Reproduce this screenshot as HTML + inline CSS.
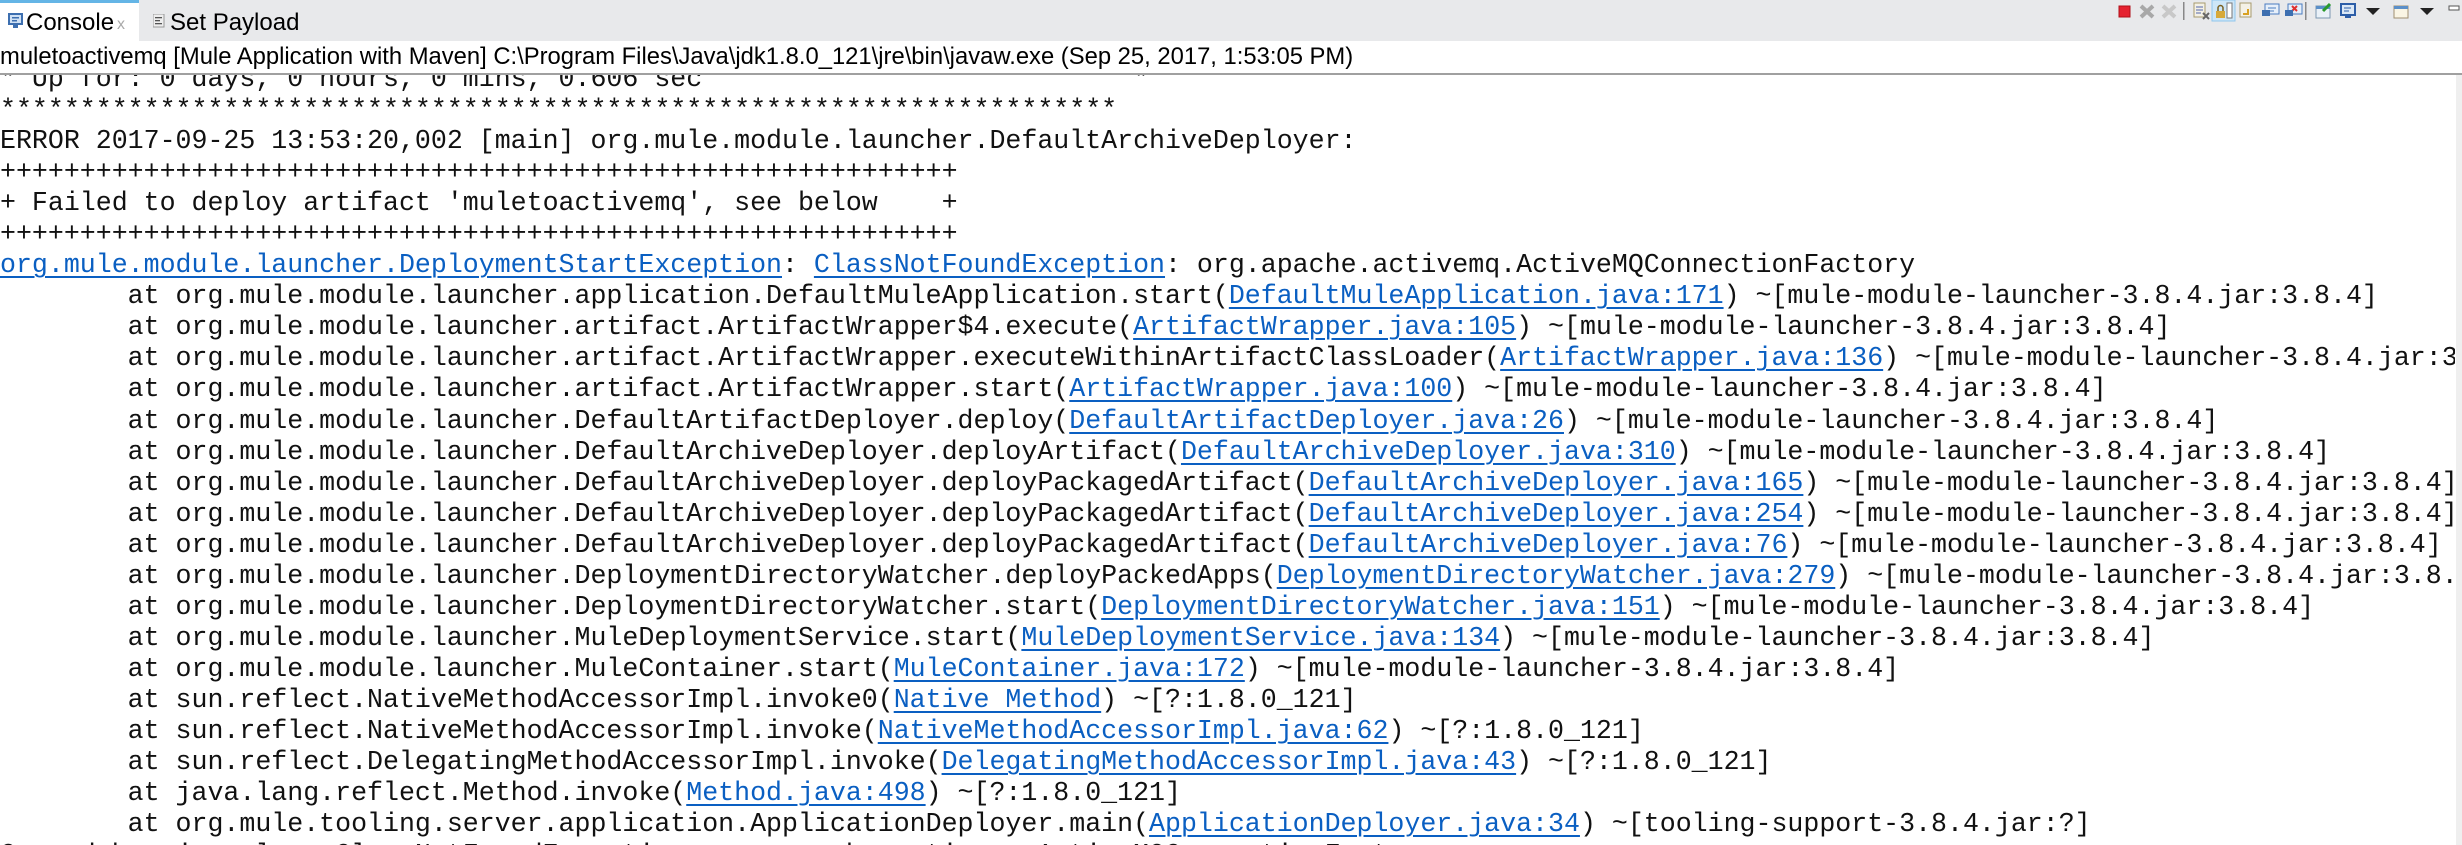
<!DOCTYPE html>
<html><head><meta charset="utf-8"><style>
html,body{margin:0;padding:0;width:2462px;height:845px;overflow:hidden;background:#fff;position:relative}
.tabbar{position:absolute;left:0;top:0;width:2462px;height:41px;background:#e8e9eb}
.tab{position:absolute;left:0;top:0;width:139px;height:41px;background:#fff;border-top:3px solid #64b5e6;box-sizing:border-box}
.t{position:absolute;font-family:"Liberation Sans",sans-serif;font-size:24px;color:#000;white-space:nowrap}
.title{position:absolute;left:0;top:41px;height:32px;width:2462px;overflow:hidden;font-family:"Liberation Sans",sans-serif;font-size:23.8px;line-height:32px;white-space:nowrap}
.sep{position:absolute;left:0;top:73px;width:2462px;height:2px;background:#a0a0a0}
.con{position:absolute;left:0;top:75px;width:2455px;height:770px;overflow:hidden}
pre{margin:-11px 0 0 0;font-family:"Liberation Mono","Courier New",monospace;font-size:26.6px;line-height:31.05px;tab-size:8;-moz-tab-size:8;color:#111}
a{color:#0a5fc2;text-decoration:underline;text-decoration-thickness:2px;text-underline-offset:4px}
.sb{position:absolute;left:2456px;top:75px;width:6px;height:770px;background:#efefef}
</style></head><body>
<div class="tabbar"></div>
<div class="tab"></div>
<svg style="position:absolute;left:8px;top:13px" width="15" height="16"><rect x="1" y="1" width="13" height="10" fill="#cfe1f5" stroke="#3d6fb0" stroke-width="2"/><rect x="4" y="4" width="7" height="1.5" fill="#3d6fb0"/><rect x="4" y="7" width="5" height="1.5" fill="#3d6fb0"/><rect x="5" y="12" width="5" height="3" fill="#3d6fb0"/></svg>
<div class="t" style="left:26px;top:9px">Console</div>
<div class="t" style="left:117px;top:16px;font-size:16px;color:#aaa">x</div>
<svg style="position:absolute;left:153px;top:14px" width="12" height="14"><rect x="0" y="0" width="11" height="13" fill="#eee" stroke="#999"/><rect x="2" y="3" width="7" height="1.3" fill="#555"/><rect x="2" y="6" width="5" height="1.3" fill="#555"/><rect x="2" y="9" width="7" height="1.3" fill="#555"/></svg>
<div class="t" style="left:170px;top:9px">Set Payload</div>

<svg style="position:absolute;left:2110px;top:0" width="352" height="24">
<rect x="9" y="6" width="11" height="11" fill="#e52230" stroke="#b01018"/>
<path d="M31 6l12 11M43 6L31 17" stroke="#a8a8a8" stroke-width="4"/>
<path d="M53 6l12 11M65 6L53 17" stroke="#c8c8c8" stroke-width="4"/>
<rect x="73" y="2" width="1.5" height="18" fill="#888"/>
<rect x="84" y="3" width="11" height="14" fill="#f4f1e6" stroke="#a79a6e"/><path d="M86 7h7M86 10h7M86 13h5" stroke="#5566aa"/><path d="M93 13l6 6M99 13l-6 6" stroke="#666" stroke-width="2"/>
<rect x="102" y="0" width="23" height="21" fill="#cde6f7" stroke="#90c6ec"/>
<rect x="106" y="11" width="9" height="7" fill="#d7a93a"/><path d="M108 11v-3a2.5 2.5 0 0 1 5 0v3" stroke="#7a6020" fill="none" stroke-width="1.5"/><rect x="117" y="3" width="5" height="15" fill="#fff" stroke="#777"/>
<rect x="130" y="3" width="11" height="14" fill="#f4f1e6" stroke="#a79a6e"/><path d="M138 9v5h-5" stroke="#d8a020" fill="none" stroke-width="2"/>
<rect x="155" y="4" width="14" height="10" fill="#e6effa" stroke="#4a7cc0"/><path d="M158 8h8M158 11h6" stroke="#4a7cc0"/><rect x="152" y="10" width="8" height="6" fill="#3d6fb0"/>
<rect x="178" y="4" width="14" height="10" fill="#e6effa" stroke="#4a7cc0"/><path d="M182 6l5 5M187 6l-5 5" stroke="#e03030" stroke-width="2"/><rect x="175" y="10" width="8" height="6" fill="#3d6fb0"/>
<rect x="195" y="2" width="1.5" height="18" fill="#888"/>
<rect x="206" y="6" width="14" height="12" fill="#eaf1f8" stroke="#7c96b0"/><rect x="206" y="6" width="14" height="3" fill="#5b8fc8"/><path d="M213 11l7-7" stroke="#2a9a2a" stroke-width="3"/>
<rect x="231" y="4" width="14" height="11" fill="#dbe8f6" stroke="#2d5ea8" stroke-width="2"/><path d="M234 8h7M234 11h5" stroke="#2d5ea8"/><rect x="235" y="16" width="6" height="2" fill="#2d5ea8"/>
<path d="M256 8h14l-7 7z" fill="#222"/>
<rect x="284" y="6" width="14" height="12" fill="#faf5e4" stroke="#a09070"/><rect x="284" y="6" width="14" height="3" fill="#5b8fc8"/>
<path d="M310 8h14l-7 7z" fill="#222"/>
<rect x="339" y="6" width="10" height="4" fill="#fff" stroke="#555"/>
</svg>

<div class="title">muletoactivemq [Mule Application with Maven] C:\Program Files\Java\jdk1.8.0_121\jre\bin\javaw.exe (Sep 25, 2017, 1:53:05 PM)</div>
<div class="sep"></div>
<div class="con"><pre>* Up for: 0 days, 0 hours, 0 mins, 0.606 sec                           *
**********************************************************************
ERROR 2017-09-25 13:53:20,002 [main] org.mule.module.launcher.DefaultArchiveDeployer:
++++++++++++++++++++++++++++++++++++++++++++++++++++++++++++
+ Failed to deploy artifact 'muletoactivemq', see below    +
++++++++++++++++++++++++++++++++++++++++++++++++++++++++++++
<a>org.mule.module.launcher.DeploymentStartException</a>: <a>ClassNotFoundException</a>: org.apache.activemq.ActiveMQConnectionFactory
	at org.mule.module.launcher.application.DefaultMuleApplication.start(<a>DefaultMuleApplication.java:171</a>) ~[mule-module-launcher-3.8.4.jar:3.8.4]
	at org.mule.module.launcher.artifact.ArtifactWrapper$4.execute(<a>ArtifactWrapper.java:105</a>) ~[mule-module-launcher-3.8.4.jar:3.8.4]
	at org.mule.module.launcher.artifact.ArtifactWrapper.executeWithinArtifactClassLoader(<a>ArtifactWrapper.java:136</a>) ~[mule-module-launcher-3.8.4.jar:3.8.4]
	at org.mule.module.launcher.artifact.ArtifactWrapper.start(<a>ArtifactWrapper.java:100</a>) ~[mule-module-launcher-3.8.4.jar:3.8.4]
	at org.mule.module.launcher.DefaultArtifactDeployer.deploy(<a>DefaultArtifactDeployer.java:26</a>) ~[mule-module-launcher-3.8.4.jar:3.8.4]
	at org.mule.module.launcher.DefaultArchiveDeployer.deployArtifact(<a>DefaultArchiveDeployer.java:310</a>) ~[mule-module-launcher-3.8.4.jar:3.8.4]
	at org.mule.module.launcher.DefaultArchiveDeployer.deployPackagedArtifact(<a>DefaultArchiveDeployer.java:165</a>) ~[mule-module-launcher-3.8.4.jar:3.8.4]
	at org.mule.module.launcher.DefaultArchiveDeployer.deployPackagedArtifact(<a>DefaultArchiveDeployer.java:254</a>) ~[mule-module-launcher-3.8.4.jar:3.8.4]
	at org.mule.module.launcher.DefaultArchiveDeployer.deployPackagedArtifact(<a>DefaultArchiveDeployer.java:76</a>) ~[mule-module-launcher-3.8.4.jar:3.8.4]
	at org.mule.module.launcher.DeploymentDirectoryWatcher.deployPackedApps(<a>DeploymentDirectoryWatcher.java:279</a>) ~[mule-module-launcher-3.8.4.jar:3.8.4]
	at org.mule.module.launcher.DeploymentDirectoryWatcher.start(<a>DeploymentDirectoryWatcher.java:151</a>) ~[mule-module-launcher-3.8.4.jar:3.8.4]
	at org.mule.module.launcher.MuleDeploymentService.start(<a>MuleDeploymentService.java:134</a>) ~[mule-module-launcher-3.8.4.jar:3.8.4]
	at org.mule.module.launcher.MuleContainer.start(<a>MuleContainer.java:172</a>) ~[mule-module-launcher-3.8.4.jar:3.8.4]
	at sun.reflect.NativeMethodAccessorImpl.invoke0(<a>Native Method</a>) ~[?:1.8.0_121]
	at sun.reflect.NativeMethodAccessorImpl.invoke(<a>NativeMethodAccessorImpl.java:62</a>) ~[?:1.8.0_121]
	at sun.reflect.DelegatingMethodAccessorImpl.invoke(<a>DelegatingMethodAccessorImpl.java:43</a>) ~[?:1.8.0_121]
	at java.lang.reflect.Method.invoke(<a>Method.java:498</a>) ~[?:1.8.0_121]
	at org.mule.tooling.server.application.ApplicationDeployer.main(<a>ApplicationDeployer.java:34</a>) ~[tooling-support-3.8.4.jar:?]
Caused by: java.lang.ClassNotFoundException: org.apache.activemq.ActiveMQConnectionFactory
</pre></div>
<div class="sb"></div>
</body></html>
